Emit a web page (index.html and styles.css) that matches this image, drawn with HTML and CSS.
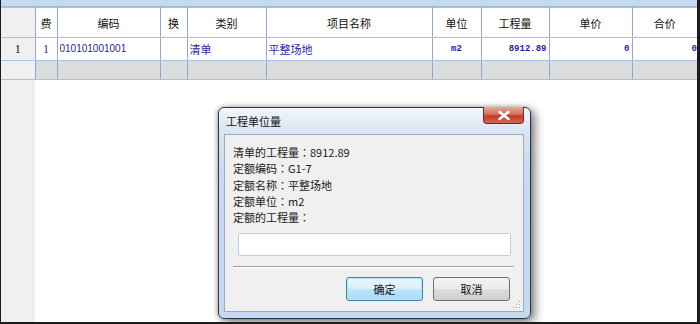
FILE: index.html
```html
<!DOCTYPE html>
<html>
  <head>
    <meta charset="utf-8">
    <link rel="stylesheet" href="styles.css">
    <title>工程单位量</title>
  </head>
  <body>
    <div class="screen">
      <div class="topband"></div>
      <table class="grid">
        <colgroup>
          <col style="width:34px"><col style="width:22px"><col style="width:103px"><col style="width:27px"><col style="width:79px">
          <col style="width:166px"><col style="width:49px"><col style="width:68px"><col style="width:83px"><col>
        </colgroup>
        <tr class="head">
          <th class="rh"></th><th>费</th><th>编码</th><th>换</th><th>类别</th>
          <th>项目名称</th><th>单位</th><th>工程量</th><th>单价</th><th>合价</th>
        </tr>
        <tr class="data">
          <td class="rh num">1</td>
          <td class="num c">1</td>
          <td class="code">010101001001</td>
          <td></td>
          <td>清单</td>
          <td>平整场地</td>
          <td class="mono c">m2</td>
          <td class="mono r">8912.89</td>
          <td class="mono r">0</td>
          <td class="mono r last">0</td>
        </tr>
        <tr class="blank">
          <td class="rh"></td><td></td><td></td><td></td><td></td>
          <td></td><td></td><td></td><td></td><td></td>
        </tr>
      </table>
      <div class="rest">
        <div class="rest-rh"></div>
      </div>

      <div class="dialog">
        <div class="titlebar">
          <span>工程单位量</span>
          <div class="close">
            <svg width="14" height="11" viewBox="0 0 14 11">
              <path d="M2.5 2 L11.5 9 M11.5 2 L2.5 9" stroke="#fff" stroke-width="2.4" stroke-linecap="round"/>
            </svg>
          </div>
        </div>
        <div class="client">
          <div class="lines">
            <div>清单的工程量<span class="colon">：</span>8912.89</div>
            <div>定额编码<span class="colon">：</span>G1-7</div>
            <div>定额名称<span class="colon">：</span>平整场地</div>
            <div>定额单位<span class="colon">：</span>m2</div>
            <div>定额的工程量<span class="colon">：</span></div>
          </div>
          <div class="field"><input type="text"></div>
          <div class="sep"></div>
          <div class="buttons">
            <button class="btn focus">确定</button>
            <button class="btn">取消</button>
          </div>
          <svg class="grip" width="8" height="8" viewBox="0 0 8 8">
            <rect x="6" y="0" width="1" height="1" fill="#aaa"/>
            <rect x="3" y="3" width="1" height="1" fill="#aaa"/>
            <rect x="6" y="3" width="1" height="1" fill="#aaa"/>
            <rect x="0" y="6" width="1" height="1" fill="#aaa"/>
            <rect x="3" y="6" width="1" height="1" fill="#aaa"/>
            <rect x="6" y="6" width="1" height="1" fill="#aaa"/>
          </svg>
        </div>
      </div>
    </div>
  </body>
</html>
```

FILE: styles.css
```css
body {
  margin: 0;
  font-family: "Noto Sans CJK SC", "Liberation Sans", sans-serif;
  font-size: 11px;
}

.screen {
  position: relative;
  width: 700px;
  height: 324px;
  box-sizing: border-box;
  border-left: 1px solid #1c1c1c;
  border-right: 3px solid #1c1c1c;
  border-bottom: 2px solid #1c1c1c;
  display: flex;
  flex-direction: column;
  background: #fff;
  overflow: hidden;
}

.topband {
  height: 6px;
  flex: none;
  background: #c6daef;
  border-bottom: 1px solid #9bb8dc;
}

.grid {
  border-collapse: collapse;
  table-layout: fixed;
  width: 696px;
  font-size: 11px;
}

.grid th,
.grid td {
  border: 1px solid #8fa9d4;
  border-top-color: #a8c3e6;
  border-bottom-color: #a8c3e6;
  padding: 0 2px;
  white-space: nowrap;
  overflow: hidden;
  line-height: 14px;
}
.grid tr > :first-child { border-left: none; }
.grid tr > :last-child { border-right: none; }

.grid th {
  height: 29px;
  font-weight: normal;
  color: #111;
  background: #fff;
  text-align: center;
}

.grid .data td {
  height: 22px;
  color: #1f1fa6;
}
.grid .data td.last {
  padding-right: 0;
}

.grid .blank td {
  height: 18px;
  background: #dcdcdc;
  border-bottom: 1px solid #a8c3e6;
}

.grid .rh,
.grid .data .rh,
.grid .blank .rh {
  background: #f0f0f0;
  color: #111;
  text-align: center;
}

.num {
  font-family: "Liberation Serif", serif;
  font-size: 12px;
}
.c { text-align: center; }
.r { text-align: right; }

.code {
  font-family: "Liberation Sans", sans-serif;
  font-size: 10px;
}

.mono {
  font-family: "Liberation Mono", monospace;
  font-size: 9px;
  font-weight: bold;
}

.rest {
  flex: 1;
  display: flex;
}
.rest-rh {
  width: 34px;
  background: #f0f0f0;
}

/* dialog floating over the grid */
.dialog {
  position: absolute;
  left: 217px;
  top: 107px;
  width: 313px;
  height: 212px;
  box-sizing: border-box;
  border: 1px solid #2f3540;
  border-radius: 6px;
  background: linear-gradient(#f2f6fb, #dae6f3 22px, #c8dbef 60px, #c4d9ef);
  box-shadow: 4px 3px 10px rgba(0, 0, 0, 0.5), -1px 0 4px rgba(0, 0, 0, 0.25);
  display: flex;
  flex-direction: column;
  padding: 0 6px 6px 5px;
}

.titlebar {
  position: relative;
  height: 26px;
  flex: none;
  display: flex;
  align-items: center;
  padding-left: 2px;
  color: #111;
}

.close {
  position: absolute;
  top: -1px;
  right: 0;
  width: 41px;
  height: 17px;
  border: 1px solid #6d2a22;
  border-top: none;
  border-radius: 0 0 4px 4px;
  background: linear-gradient(#e9a99b, #d4705d 45%, #c23a22 55%, #cf6a4f);
  display: flex;
  align-items: center;
  justify-content: center;
  box-sizing: border-box;
}

.client {
  position: relative;
  flex: 1;
  background: #f0f0f0;
  border: 1px solid #98acc4;
  display: flex;
  flex-direction: column;
}

.lines {
  padding: 9px 0 0 8px;
  line-height: 16.3px;
  color: #1a1a1a;
}

/* centred full-width colon, as on the Windows UI font */
.colon {
  font-family: "Noto Sans CJK TC", sans-serif;
}

.field {
  padding: 8px 12px 0 13px;
}
.field input {
  display: block;
  width: 100%;
  height: 23px;
  box-sizing: border-box;
  border: 1px solid #c5cdd6;
  border-radius: 2px;
  background: #fff;
  outline: none;
}

.sep {
  margin: 10px 9px 0 8px;
  height: 1px;
  background: #a0a0a0;
  border-bottom: 1px solid #fff;
}

.buttons {
  display: flex;
  justify-content: flex-end;
  gap: 10px;
  padding: 9px 13px 0 0;
}

.btn {
  width: 77px;
  height: 24px;
  border: 1px solid #707070;
  border-radius: 3px;
  background: linear-gradient(#f2f2f2, #ebebeb 50%, #dddddd 51%, #cfcfcf);
  font-family: "Noto Sans CJK SC", sans-serif;
  font-size: 11px;
  color: #111;
  padding: 0;
}
.btn.focus {
  border-color: #3c7fb1;
  box-shadow: inset 0 0 0 1px #bde4f7;
  background: linear-gradient(#eaf6fd, #d9f0fc 50%, #bee6fd 51%, #a7d9f5);
}

.grip {
  position: absolute;
  right: 2px;
  bottom: 2px;
}
```
